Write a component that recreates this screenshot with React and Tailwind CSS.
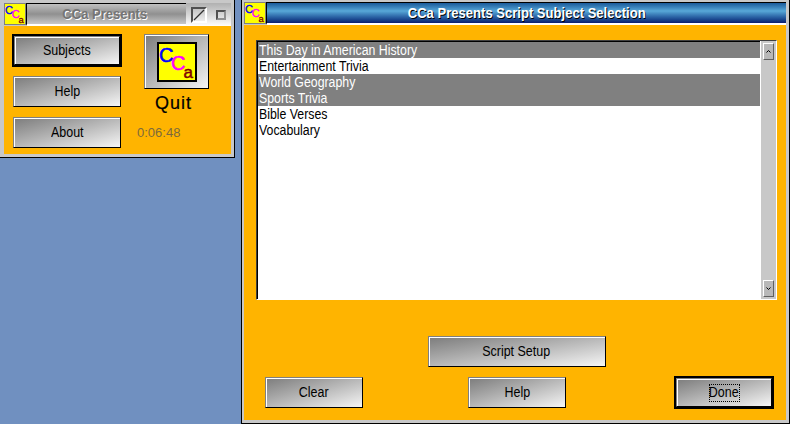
const ui = { fontFamily: '"Liberation Sans", sans-serif' };

function Logo({ small }) {
  return (
    <svg viewBox="2 2 36 36" className={small ? "w-[20px] h-[20px] overflow-visible" : "w-full h-full overflow-visible"}>
      <text x="2" y="19.5" fontSize="20" fontFamily="Liberation Sans" fill="#0000ff" stroke="#0000ff" strokeWidth="0.6">C</text>
      <text x="14" y="28" fontSize="20" fontFamily="Liberation Sans" fill="#ff00ff" stroke="#ff00ff" strokeWidth="0.6">C</text>
      <text x="26.5" y="36" fontSize="17" fontFamily="Liberation Sans" fill="#800000" stroke="#800000" strokeWidth="0.5">a</text>
    </svg>
  );
}

function WinButton({ label, w, h, focus, dotted }) {
  const text = <span className="inline-block scale-x-[0.89]">{label}</span>;
  const inner = (
    <div
      className={`${focus ? "" : w} ${h} flex items-center justify-center bg-linear-to-br from-[#7c7c7c] to-[#f6f6f6] border border-t-[#808080] border-l-[#808080] border-r-black border-b-black shadow-[inset_1px_1px_0_#ffffff] text-[14px] text-black`}
    >
      {dotted ? (
        <span className="w-[31px] h-[18px] flex items-center justify-center border border-dotted border-black whitespace-nowrap">{text}</span>
      ) : text}
    </div>
  );
  if (focus) {
    return <div className={`${w} border-[2px] border-black`}>{inner}</div>;
  }
  return inner;
}

function TitleIcon() {
  return (
    <div className="w-[22px] h-[22px] bg-[#ffff00] border border-[#808080] flex items-center justify-center shrink-0">
      <Logo small />
    </div>
  );
}

function ListRow({ label, selected }) {
  return (
    <div className={selected ? "bg-[#808080] text-white px-px" : "text-black px-px"}>
      <span className="inline-block origin-left scale-x-[0.88] whitespace-nowrap">{label}</span>
    </div>
  );
}

export default function App() {
  return (
    <div className="flex w-[790px] h-[424px] overflow-hidden bg-[#7090c0]" style={ui}>
      <div className="w-[235px] h-[158px] shrink-0 flex flex-col bg-[#c8c8c8] border-r border-b border-black pt-[3px] pl-[1px] pr-[3px] pb-[3px]">
        <div className="flex h-[23px] shrink-0">
          <div className="pl-[3px]"><TitleIcon /></div>
          <div className="flex-1 flex items-center justify-center pr-[4px] bg-linear-to-b from-[#c0c0c0] via-[#909090] to-[#c8c8c8] border-t border-l border-black border-b-2 border-b-white text-[15px] font-bold text-[#757575] [text-shadow:1px_1px_0_#ffffff]">
            <span className="inline-block scale-x-[0.87] whitespace-nowrap">CCa Presents</span>
          </div>
          <div className="w-[45px] flex items-center gap-[9px] pl-[5px] bg-linear-to-b from-[#b0b0b0] to-white">
            <div className="w-[16px] h-[16px] border-[2px] border-t-[#505050] border-l-[#505050] border-r-white border-b-white flex items-center justify-center">
              <svg viewBox="0 0 12 12" className="w-[12px] h-[12px]"><path d="M1 11L11 1" stroke="#303030" strokeWidth="1.3" /></svg>
            </div>
            <div className="w-[10px] h-[10px] border-[2px] border-t-[#505050] border-l-[#505050] border-r-[#909090] border-b-[#909090]"></div>
          </div>
        </div>
        <div className="flex-1 ml-[3px] bg-[#ffb400] flex pt-[8px] pl-[8px]">
          <div className="flex flex-col w-[110px] items-center">
            <WinButton label="Subjects" w="w-[110px]" h="h-[29px]" focus />
            <div className="mt-[9px]"><WinButton label="Help" w="w-[108px]" h="h-[31px]" /></div>
            <div className="mt-[10px]"><WinButton label="About" w="w-[108px]" h="h-[31px]" /></div>
          </div>
          <div className="ml-[15px] flex flex-col">
            <div className="ml-[7px] w-[65px] h-[55px] flex items-center justify-center bg-linear-to-br from-[#7c7c7c] to-[#f6f6f6] border border-t-[#808080] border-l-[#808080] border-r-black border-b-black shadow-[inset_1px_1px_0_#ffffff]">
              <div className="w-[40px] h-[40px] bg-[#ffff00] border-[2px] border-black"><Logo /></div>
            </div>
            <div className="ml-[4px] w-[65px] text-center text-[18px] leading-[20px] mt-[4px] text-black tracking-[1px] [-webkit-text-stroke:0.2px_black]">Quit</div>
            <div className="text-[13px] leading-[16px] mt-[12px] text-[#7c6a3c]">0:06:48</div>
          </div>
        </div>
      </div>

      <div className="ml-[6px] flex-1 flex flex-col bg-[#c8c8c8] border-l border-r border-b border-black pt-[2px] pr-[3px] pb-[3px] pl-[2px]">
        <div className="flex h-[23px] shrink-0">
          <TitleIcon />
          <div className="flex-1 flex items-center justify-center bg-linear-to-b from-[#1a5a9a] via-[#58a8d8] via-40% to-[#0c1c70] border-t border-l border-black border-b-2 border-b-white text-[15px] font-bold text-white [text-shadow:1px_1px_0_#000000]">
            <span className="inline-block scale-x-[0.87] whitespace-nowrap">CCa Presents Script Subject Selection</span>
          </div>
        </div>
        <div className="flex-1 bg-[#ffb400] flex flex-col">
          <div className="mt-[15px] ml-[12px] mr-[9px] h-[260px] flex border border-t-[#404040] border-l-[#404040] border-r-white border-b-white">
            <div className="flex-1 bg-white border-t border-l border-black text-[14px] leading-[16px]">
              <ListRow label="This Day in American History" selected />
              <ListRow label="Entertainment Trivia" />
              <ListRow label="World Geography" selected />
              <ListRow label="Sports Trivia" selected />
              <ListRow label="Bible Verses" />
              <ListRow label="Vocabulary" />
            </div>
            <div className="w-[16px] bg-[#c8c8c8] border-l border-white flex flex-col justify-between px-[2px] py-[2px]">
              <div className="h-[17px] bg-[#b8b8b8] border border-t-white border-l-white border-r-[#606060] border-b-[#606060] flex items-center justify-center">
                <svg viewBox="0 0 5 3" className="w-[5px] h-[3px]"><path d="M0.5 2.5L2.5 0.5L4.5 2.5" stroke="#000" fill="none" /></svg>
              </div>
              <div className="h-[17px] bg-[#b8b8b8] border border-t-white border-l-white border-r-[#606060] border-b-[#606060] flex items-center justify-center">
                <svg viewBox="0 0 5 3" className="w-[5px] h-[3px]"><path d="M0.5 0.5L2.5 2.5L4.5 0.5" stroke="#000" fill="none" /></svg>
              </div>
            </div>
          </div>
          <div className="mt-[36px] flex justify-center">
            <div className="ml-[3px]"><WinButton label="Script Setup" w="w-[178px]" h="h-[31px]" /></div>
          </div>
          <div className="mt-[10px] flex items-start pl-[21px]">
            <WinButton label="Clear" w="w-[98px]" h="h-[31px]" />
            <div className="ml-[105px]"><WinButton label="Help" w="w-[98px]" h="h-[31px]" /></div>
            <div className="ml-[108px] -mt-[1px]"><WinButton label="Done" w="w-[100px]" h="h-[29px]" focus dotted /></div>
          </div>
        </div>
      </div>
    </div>
  );
}
